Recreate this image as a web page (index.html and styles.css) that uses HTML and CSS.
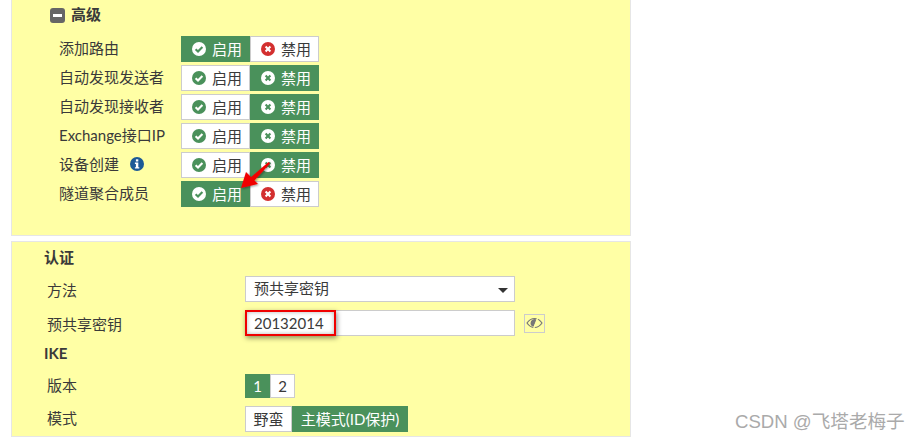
FILE: index.html

```html
<!DOCTYPE html>
<html lang="zh-Hans">
<head>
  <meta charset="UTF-8">
  <title>高级</title>
  <link rel="stylesheet" href="styles.css">
</head>
<body>
  <svg width="0" height="0" class="defs">
    <symbol id="ok" viewBox="0 0 14 14">
      <circle cx="7" cy="7" r="7" fill="currentColor"/>
      <path d="M3.6 7.2 6 9.5l4.4-4.6" fill="none" stroke="var(--mark)" stroke-width="2.1"/>
    </symbol>
    <symbol id="no" viewBox="0 0 14 14">
      <circle cx="7" cy="7" r="7" fill="currentColor"/>
      <path d="M4.6 4.6l4.8 4.8M9.4 4.6l-4.8 4.8" fill="none" stroke="var(--mark)" stroke-width="2.1"/>
    </symbol>
  </svg>

  <div class="page">
    <section class="panel panel-adv">
      <h3 class="adv-title">
        <span class="minus"></span><span class="adv-text">高级</span>
      </h3>

      <div class="row">
        <label class="row-label">添加路由</label>
        <div class="toggle">
          <span class="seg seg-icon on"><svg class="ico"><use href="#ok"/></svg>启用</span>
          <span class="seg seg-icon off-red"><svg class="ico"><use href="#no"/></svg>禁用</span>
        </div>
      </div>
      <div class="row">
        <label class="row-label">自动发现发送者</label>
        <div class="toggle">
          <span class="seg seg-icon off-green"><svg class="ico"><use href="#ok"/></svg>启用</span>
          <span class="seg seg-icon on"><svg class="ico"><use href="#no"/></svg>禁用</span>
        </div>
      </div>
      <div class="row">
        <label class="row-label">自动发现接收者</label>
        <div class="toggle">
          <span class="seg seg-icon off-green"><svg class="ico"><use href="#ok"/></svg>启用</span>
          <span class="seg seg-icon on"><svg class="ico"><use href="#no"/></svg>禁用</span>
        </div>
      </div>
      <div class="row">
        <label class="row-label">Exchange接口IP</label>
        <div class="toggle">
          <span class="seg seg-icon off-green"><svg class="ico"><use href="#ok"/></svg>启用</span>
          <span class="seg seg-icon on"><svg class="ico"><use href="#no"/></svg>禁用</span>
        </div>
      </div>
      <div class="row">
        <label class="row-label">设备创建<svg class="info" viewBox="0 0 14 14">
            <circle cx="7" cy="7" r="7" fill="#1c5a96"/>
            <rect x="5.9" y="2.3" width="2.4" height="2.2" fill="#fff"/>
            <path d="M4.9 5.600h3.400v4.600h1v1.400H4.900v-1.400h1V7h-1z" fill="#fff"/>
          </svg>
        </label>
        <div class="toggle">
          <span class="seg seg-icon off-green"><svg class="ico"><use href="#ok"/></svg>启用</span>
          <span class="seg seg-icon on"><svg class="ico"><use href="#no"/></svg>禁用</span>
        </div>
      </div>
      <div class="row">
        <label class="row-label">隧道聚合成员</label>
        <div class="toggle">
          <span class="seg seg-icon on"><svg class="ico"><use href="#ok"/></svg>启用</span>
          <span class="seg seg-icon off-red"><svg class="ico"><use href="#no"/></svg>禁用</span>
        </div>
      </div>

      <!-- annotation arrow -->
      <svg class="arrow" width="40" height="36" viewBox="0 0 40 36">
        <defs>
          <filter id="soft" x="-30%" y="-30%" width="170%" height="170%">
            <feDropShadow dx="1" dy="1" stdDeviation="1.2" flood-color="#000" flood-opacity="0.4"/>
          </filter>
        </defs>
        <g filter="url(#soft)">
          <path d="M32.500 4 34 5.500 18 23 14 20z" fill="#f00000"/>
          <path d="M5 30 10 14 22 26z" fill="#f00000"/>
        </g>
      </svg>
    </section>

    <section class="panel panel-auth">
      <h4 class="sub-title">认证</h4>
      <div class="field">
        <label class="field-label">方法</label>
        <div class="select">预共享密钥<span class="caret"></span></div>
      </div>
      <div class="field">
        <label class="field-label">预共享密钥</label>
        <div class="input">20132014<span class="redbox"></span></div>
        <span class="eye">
          <svg width="17" height="12" viewBox="0 0 17 12">
            <path d="M1 6C3 3 5.600 1.500 8.500 1.500S14 3 16 6c-2 3-4.600 4.500-7.500 4.500S3 9 1 6z" fill="none" stroke="#777" stroke-width="1.200"/>
            <path d="M4.500 6a4 4 0 0 1 6.500-3.100L7.500 9.800A4 4 0 0 1 4.500 6z" fill="#777"/>
            <path d="M12 0 7.500 12" stroke="#ffffa5" stroke-width="1.400"/>
          </svg>
        </span>
      </div>
      <h4 class="sub-title sub-ike">IKE</h4>
      <div class="field field-ver">
        <label class="field-label field-label-up">版本</label>
        <div class="toggle toggle-ver">
          <span class="seg on">1</span>
          <span class="seg plain">2</span>
        </div>
      </div>
      <div class="field field-mode">
        <label class="field-label field-label-up">模式</label>
        <div class="toggle toggle-mode">
          <span class="seg plain">野蛮</span>
          <span class="seg on">主模式(ID保护)</span>
        </div>
      </div>
    </section>
  </div>

  <div class="watermark">CSDN @飞塔老梅子</div>
</body>
</html>
```

FILE: styles.css

```css
* {
  box-sizing: border-box;
}
html, body {
  margin: 0;
  height: 441px;
  overflow: hidden;
}
body {
  font-family: Lato, 'Noto Sans CJK SC', sans-serif;
  font-size: 15px;
  color: #3a3a3a;
  background: white;
  position: relative;
}
.defs {
  position: absolute;
}
.page {
  width: 620px;
  margin-left: 11px;
}
.panel {
  background: #ffffa5;
  border: 1px solid #e6e6e6;
  position: relative;
}
.panel-adv {
  height: 236px;
  border-top: none;
  padding: 5px 0 0 38px;
  margin-bottom: 5px;
}
.adv-title {
  display: flex;
  align-items: center;
  gap: 6px;
  margin: 0 0 10px 0;
  height: 21px;
  font-size: 15px;
  font-weight: bold;
}
.adv-text {
  margin-top: -4px;
}
.minus {
  width: 15px;
  height: 15px;
  background: #666;
  border-radius: 3px;
  display: flex;
  align-items: center;
  justify-content: center;
}
.minus::before {
  content: "";
  width: 9px;
  height: 3px;
  background: white;
}
.row {
  display: flex;
  align-items: center;
  height: 26px;
  margin: 0 0 3px 9px;
}
.row-label {
  width: 122px;
  flex: none;
  margin-top: -4px;
  white-space: nowrap;
}
.info {
  width: 14px;
  height: 14px;
  margin-left: 11px;
  vertical-align: -1px;
}
.toggle {
  display: flex;
  height: 26px;
}
.seg {
  display: flex;
  align-items: center;
  justify-content: center;
  height: 100%;
  border: 1px solid #ccc;
  background: white;
}
.seg-icon {
  width: 69px;
  gap: 6px;
  justify-content: flex-start;
  padding: 0 0 2px 10px;
}
.seg.on {
  background: #4a915b;
  border-color: #4a915b;
  color: white;
}
.ico {
  width: 14px;
  height: 14px;
  margin-top: 2px;
}
.on .ico {
  color: white;
  --mark: #4a915b;
}
.off-green .ico {
  color: #4a915b;
  --mark: white;
}
.off-red .ico {
  color: #d32f2f;
  --mark: white;
}
.arrow {
  position: absolute;
  left: 224px;
  top: 158px;
}
.panel-auth {
  height: 196px;
  padding: 6px 0 0 32px;
}
.sub-title {
  margin: 0;
  height: 20px;
  line-height: 18px;
  font-size: 15px;
  font-weight: bold;
}
.sub-ike {
  margin-top: 8px;
}
.field {
  display: flex;
  align-items: center;
  height: 26px;
  margin-top: 8px;
}
.field-label {
  width: 198px;
  flex: none;
  margin-left: 3px;
}
.field-label-up {
  margin-top: -4px;
}
.select, .input {
  position: relative;
  width: 270px;
  height: 26px;
  border: 1px solid #ccc;
  background: white;
  padding-left: 8px;
  line-height: 24px;
}
.select {
  line-height: 22px;
}
.caret {
  position: absolute;
  right: 6px;
  top: 11px;
  border: 5px solid transparent;
  border-top: 5px solid #333;
  border-bottom: none;
}
.redbox {
  position: absolute;
  left: -1px;
  top: -1px;
  width: 91px;
  height: 26px;
  border: 2px solid #f00000;
  box-shadow: 1px 2px 5px rgba(0, 0, 0, 0.45), inset 0 0 4px rgba(0, 0, 0, 0.3);
}
.eye {
  width: 21px;
  height: 19px;
  margin-left: 9px;
  border: 1px solid #ccc;
  display: flex;
  align-items: center;
  justify-content: center;
}
.field-ver {
  height: 24px;
  margin-top: 10px;
}
.toggle-ver {
  height: 24px;
}
.toggle-ver .seg {
  width: 25px;
}
.toggle-mode .seg {
  padding-bottom: 2px;
}
.toggle-mode .seg.plain {
  width: 47px;
}
.toggle-mode .seg.on {
  width: 116px;
}
.watermark {
  position: absolute;
  left: 735px;
  top: 410px;
  font-family: 'Liberation Sans', 'Noto Sans CJK SC', sans-serif;
  font-size: 18.6px;
  line-height: 24px;
  color: #aaa;
  white-space: nowrap;
}
```
